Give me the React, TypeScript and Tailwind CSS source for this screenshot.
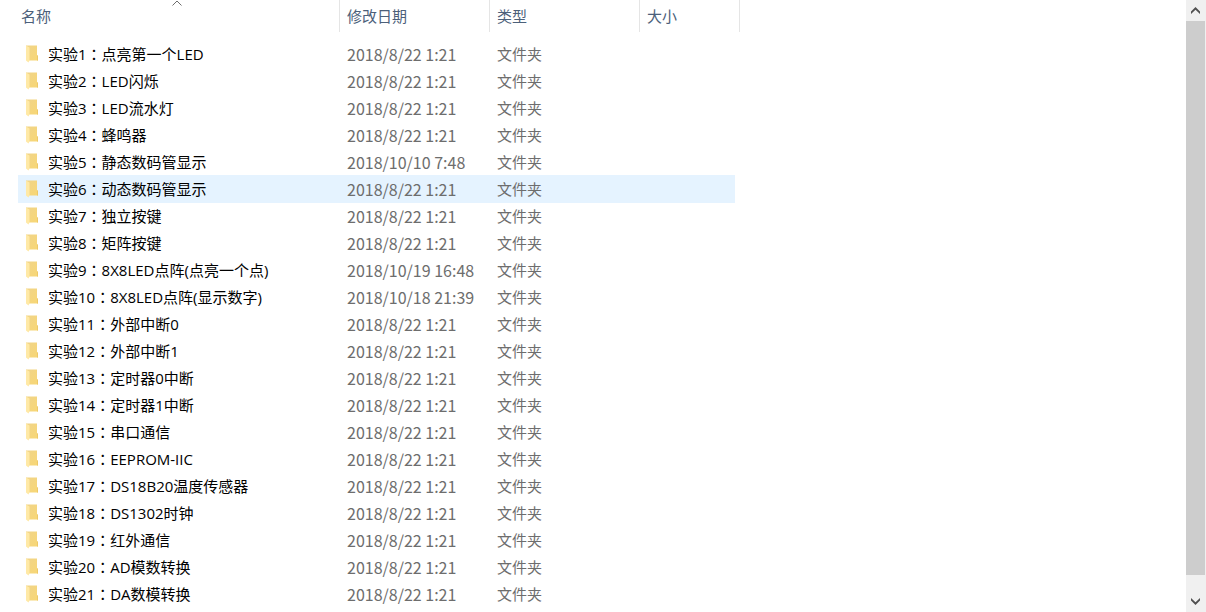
import clsx from "clsx";

type Folder = {
  index: number;
  title: string;
  modified?: string;
};

const DEFAULT_MODIFIED = "2018/8/22 1:21";
const SELECTED_INDEX = 6;

const FOLDERS: Folder[] = [
  { index: 1, title: "点亮第一个LED" },
  { index: 2, title: "LED闪烁" },
  { index: 3, title: "LED流水灯" },
  { index: 4, title: "蜂鸣器" },
  { index: 5, title: "静态数码管显示", modified: "2018/10/10 7:48" },
  { index: 6, title: "动态数码管显示" },
  { index: 7, title: "独立按键" },
  { index: 8, title: "矩阵按键" },
  { index: 9, title: "8X8LED点阵(点亮一个点)", modified: "2018/10/19 16:48" },
  { index: 10, title: "8X8LED点阵(显示数字)", modified: "2018/10/18 21:39" },
  { index: 11, title: "外部中断0" },
  { index: 12, title: "外部中断1" },
  { index: 13, title: "定时器0中断" },
  { index: 14, title: "定时器1中断" },
  { index: 15, title: "串口通信" },
  { index: 16, title: "EEPROM-IIC" },
  { index: 17, title: "DS18B20温度传感器" },
  { index: 18, title: "DS1302时钟" },
  { index: 19, title: "红外通信" },
  { index: 20, title: "AD模数转换" },
  { index: 21, title: "DA数模转换" },
];

function FolderIcon() {
  return (
    <svg width="12" height="18" viewBox="0 0 12 18" className="shrink-0" aria-hidden="true">
      <defs>
        <linearGradient id="folder-back" x1="0" y1="0" x2="1" y2="1">
          <stop offset="0" stopColor="#f0d48a" />
          <stop offset="1" stopColor="#f8d775" />
        </linearGradient>
      </defs>
      <path d="M0 0.5H11V10L12 11V15.5H1Z" fill="url(#folder-back)" />
      <path d="M0 0.5L3.5 2.5V15.5L2.5 17.5L0 15.5Z" fill="#ffe9a6" />
      <path d="M11 10L12 11V15.5H11Z" fill="#ecc869" />
    </svg>
  );
}

function HeaderCell({ label, sorted, span }: { label: string; sorted?: boolean; span?: number }) {
  return (
    <th
      scope="col"
      colSpan={span}
      aria-sort={sorted ? "ascending" : undefined}
      className="relative h-8 border-r border-[#e5e5e5] p-0 text-left font-normal"
    >
      <button
        type="button"
        className={clsx("block w-full text-left text-[#4c607a]", sorted ? "pl-[3px]" : "pl-[7px]")}
      >
        {label}
      </button>
      {sorted && (
        <svg width="10" height="6" viewBox="0 0 10 6" className="absolute top-0 left-[154px]" aria-hidden="true">
          <path d="M0.5 5.5L5 1L9.5 5.5" fill="none" stroke="#6d6d6d" />
        </svg>
      )}
    </th>
  );
}

function FolderRow({ folder }: { folder: Folder }) {
  const selected = folder.index === SELECTED_INDEX;

  return (
    <tr
      aria-selected={selected}
      className={clsx("h-[27px]", selected && "bg-[#e5f3ff] [&>td]:shadow-[0_1px_0_#e5f3ff]")}
    >
      <td className="p-0 pl-2">
        <div className="flex items-center gap-[10px] text-black">
          <FolderIcon />
          <span>
            实验{folder.index}
            <span lang="zh-TW" className="font-['Noto_Sans_CJK_TC',sans-serif]">
              ：
            </span>
            {folder.title}
          </span>
        </div>
      </td>
      <td className="p-0 pl-[7px] font-['Noto_Sans_CJK_SC',sans-serif] text-[16px]">
        {folder.modified ?? DEFAULT_MODIFIED}
      </td>
      <td className="p-0 pl-[7px]">文件夹</td>
      <td className="p-0" />
    </tr>
  );
}

function ScrollButton({ direction }: { direction: "up" | "down" }) {
  const up = direction === "up";

  return (
    <button
      type="button"
      aria-label={up ? "向上滚动" : "向下滚动"}
      className="flex h-[21px] items-center justify-center pr-px"
    >
      <svg width="9" height="7" viewBox="0 0 9 7" fill="#505050" aria-hidden="true">
        {up ? <path d="M4.5 0L9 4.5V7L4.5 2.7L0 7V4.5Z" /> : <path d="M4.5 7L9 2.5V0L4.5 4.3L0 0V2.5Z" />}
      </svg>
    </button>
  );
}

function ScrollBar() {
  return (
    <div className="flex w-5 shrink-0 flex-col bg-[#f0f0f0]">
      <ScrollButton direction="up" />
      <div className="flex-1 pr-px pb-4">
        <div className="h-full bg-[#cdcdcd]" />
      </div>
      <ScrollButton direction="down" />
    </div>
  );
}

export default function App() {
  return (
    <div
      lang="zh-CN"
      className="flex h-screen overflow-hidden bg-white font-['Open_Sans','Noto_Sans_CJK_SC',sans-serif] text-[15px] leading-[22px] text-[#6d6d6d]"
    >
      <main className="min-w-0 flex-1 overflow-hidden pl-[18px]">
        <table className="w-[722px] table-fixed border-separate border-spacing-0">
          <colgroup>
            <col className="w-[322px]" />
            <col className="w-[150px]" />
            <col className="w-[150px]" />
            <col className="w-[95px]" />
            <col className="w-[5px]" />
          </colgroup>
          <thead>
            <tr>
              <HeaderCell label="名称" sorted />
              <HeaderCell label="修改日期" />
              <HeaderCell label="类型" />
              <HeaderCell label="大小" span={2} />
            </tr>
            <tr aria-hidden="true">
              <td colSpan={5} className="h-2 p-0" />
            </tr>
          </thead>
          <tbody>
            {FOLDERS.map((folder) => (
              <FolderRow key={folder.index} folder={folder} />
            ))}
          </tbody>
        </table>
      </main>
      <ScrollBar />
    </div>
  );
}
